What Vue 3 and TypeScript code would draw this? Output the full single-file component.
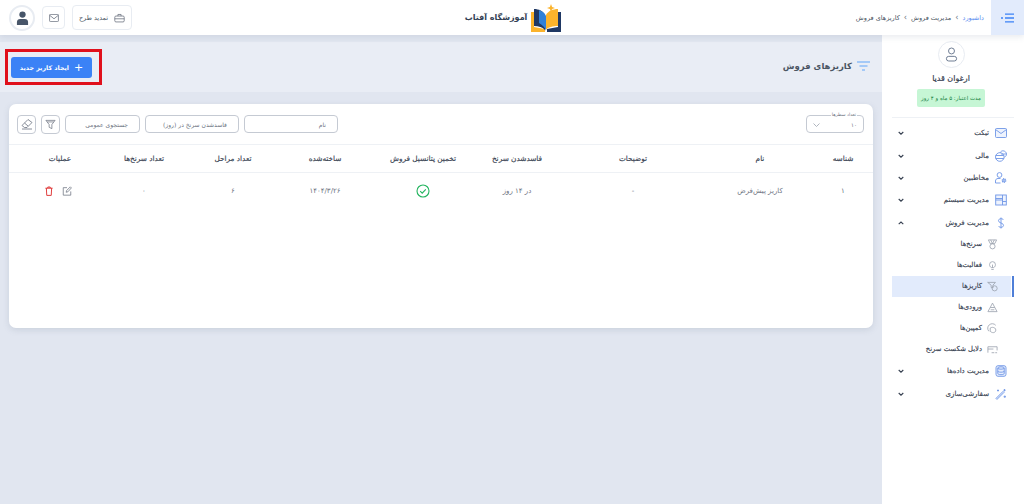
<template>
  <div class="page" dir="rtl">
    <header class="topbar">
      <div class="top-right">
        <button class="menu-toggle">
          <svg width="14" height="10" viewBox="0 0 14 10"><circle cx="1" cy="5" r="1" fill="#3b82f6" /><path d="M4 1.200h9M4 5h9M4 8.800h9" stroke="#3b82f6" stroke-width="1.300" fill="none" /></svg>
        </button>
        <nav class="crumbs">
          <span class="crumb-link">داشبورد</span>
          <span class="crumb-sep">›</span>
          <span>مدیریت فروش</span>
          <span class="crumb-sep">›</span>
          <span>کاریزهای فروش</span>
        </nav>
      </div>
      <div class="logo">
        <svg width="30" height="28" viewBox="0 0 30 28">
          <path d="M0 8h3v15l11 2v3H0z" fill="#fbb32c" />
          <path d="M30 8h-3v15l-11 2v3h14z" fill="#1f3864" />
          <path d="M3 5c5 0 9 2 11 6v15c-3-3-6-4-11-4z" fill="#1f3864" />
          <path d="M27 5c-5 0-10 2-12 6v15c2-3 7-4 12-4z" fill="#fbb32c" />
          <path d="M8 6c3 1 6 3 7 6v15c-1-4-4-6-7-8z" fill="#2f80d8" />
          <path d="M20 0l1.100 2.900L24 4l-2.900 1.100L20 8l-1.100-2.900L16 4l2.900-1.100z" fill="#fbb32c" />
        </svg>
        <span class="logo-text">آموزشگاه آفتاب</span>
      </div>
      <div class="top-left">
        <button class="renew">
          <svg width="11" height="10" viewBox="0 0 14 12" fill="none" stroke="#6b7280" stroke-width="1"><rect x="1" y="3.500" width="12" height="7.500" rx="1.500" /><path d="M5 3.500V1.500h4v2M1 7h12" /></svg>
          <span>تمدید طرح</span>
        </button>
        <button class="mail">
          <svg width="10" height="8" viewBox="0 0 12 10" fill="none" stroke="#6b7280" stroke-width="1"><rect x=".5" y=".5" width="11" height="9" rx="1" /><path d="M.5 1.500L6 6l5.500-4.500" /></svg>
        </button>
        <div class="user-pic">
          <svg width="13" height="14" viewBox="0 0 14 15" fill="#475569"><circle cx="7" cy="3.800" r="3.400" /><path d="M1 15v-3.200c0-2 1.500-3.300 3.500-3.300h5c2 0 3.500 1.300 3.500 3.300V15z" /></svg>
        </div>
      </div>
    </header>

    <div class="body">
      <aside class="sidebar">
        <div class="profile">
          <div class="avatar">
            <svg width="13" height="15" viewBox="0 0 14 16" fill="none" stroke="#64748b" stroke-width="1"><circle cx="7" cy="4.200" r="3.200" /><rect x="1.500" y="10" width="11" height="5" rx="2.500" /></svg>
          </div>
          <div class="user-name">ارغوان قدیا</div>
          <div class="expire">مدت اعتبار: ۵ ماه و ۴ روز</div>
        </div>
        <ul class="menu">
          <template v-for="item in menu" :key="item.title">
            <li class="menu-item">
              <svg class="menu-icon" width="12" height="12" viewBox="0 0 12 12" fill="none" stroke="#6f96e6" stroke-width=".9" v-html="item.icon"></svg>
              <span class="menu-title">{{ item.title }}</span>
              <svg class="chev" width="6" height="4" viewBox="0 0 6 4" fill="none" stroke="#374151" stroke-width="1.100">
                <path :d="item.open ? 'M.7 3.200L3 1l2.300 2.200' : 'M.7 1L3 3.200 5.300 1'" />
              </svg>
            </li>
            <template v-if="item.open">
              <li v-for="sub in subMenu" :key="sub.title" class="sub-item" :class="{ active: sub.active }">
                <svg class="sub-icon" width="11" height="11" viewBox="0 0 12 12" fill="none" stroke="#9ca3af" stroke-width=".9" v-html="sub.icon"></svg>
                <span>{{ sub.title }}</span>
              </li>
            </template>
          </template>
        </ul>
      </aside>

      <main class="content">
        <section class="page-head">
          <div class="page-title">
            <svg width="13" height="10" viewBox="0 0 13 10" fill="none" stroke="#60a5fa" stroke-width="1.200"><path d="M0 1h13M2.500 5h8M5 9h3" /></svg>
            <h1>کاریزهای فروش</h1>
          </div>
          <div class="highlight">
            <button class="create-btn"><span class="plus">+</span><span>ایجاد کاریز جدید</span></button>
          </div>
        </section>

        <section class="card">
          <div class="filters">
            <fieldset class="rows-select">
              <legend>تعداد سطرها</legend>
              <span>۱۰</span>
              <svg width="7" height="4" viewBox="0 0 7 4" fill="none" stroke="#9ca3af" stroke-width=".8"><path d="M.5.500L3.500 3.500 6.500.500" /></svg>
            </fieldset>
            <div class="filter-group">
              <div class="field w-name">نام</div>
              <div class="field w-name">فاسدشدن سرنخ در (روز)</div>
              <div class="field w-search">جستجوی عمومی</div>
              <button class="icon-btn">
                <svg width="11" height="11" viewBox="0 0 12 12" fill="none" stroke="#6b7280" stroke-width=".8"><path d="M1 1.500h10L7.500 6v4.500l-3-1.500V6z" /><path d="M2.500 3.200h7" /></svg>
              </button>
              <button class="icon-btn">
                <svg width="12" height="12" viewBox="0 0 12 12" fill="none" stroke="#6b7280" stroke-width=".8"><path d="M1 7.500L7 1.500l4 3-5 5H3.500z" /><path d="M3.500 5l3.500 3M1 11h10" /></svg>
              </button>
            </div>
          </div>

          <table class="grid">
            <colgroup>
              <col v-for="(w, i) in colWidths" :key="i" :style="{ width: w + 'px' }" />
            </colgroup>
            <thead>
              <tr><th v-for="h in headers" :key="h">{{ h }}</th></tr>
            </thead>
            <tbody>
              <tr>
                <td>۱</td>
                <td>کاریز پیش‌فرض</td>
                <td>-</td>
                <td>در ۱۴ روز</td>
                <td>
                  <svg class="cell-icon" width="14" height="14" viewBox="0 0 14 14" fill="none" stroke="#22b45e" stroke-width="1.100"><circle cx="7" cy="7" r="6" /><path d="M4.200 7.200l2 2 3.600-3.800" /></svg>
                </td>
                <td class="date">۱۴۰۴/۳/۲۶</td>
                <td>۶</td>
                <td>۰</td>
                <td>
                  <div class="ops">
                    <svg width="10" height="10" viewBox="0 0 12 12" fill="none" stroke="#6b7280" stroke-width=".9"><path d="M6 2H1.500v9h9V6.500" /><path d="M5 7.500l.5-2L10 1l1.300 1.300L7 7z" /></svg>
                    <svg width="8" height="10" viewBox="0 0 10 12" fill="none" stroke="#dc2626" stroke-width="1.100"><path d="M.5 2.500h9M3.500 2.500V1h3v1.500M1.700 2.500l.5 9h5.600l.5-9" /></svg>
                  </div>
                </td>
              </tr>
            </tbody>
          </table>
        </section>
      </main>
    </div>
  </div>
</template>

<script setup lang="ts">
interface MenuItem {
  title: string
  icon: string
  open?: boolean
}

interface SubItem {
  title: string
  icon: string
  active?: boolean
}

const menu: MenuItem[] = [
  { title: 'تیکت', icon: '<rect x=".5" y="1.500" width="11" height="9" rx="1" fill="#eef3fd"/><path d="M.5 2.500L6 6.500l5.500-4"/>' },
  { title: 'مالی', icon: '<circle cx="4.800" cy="7" r="4.300"/><path d="M.7 5.500h8.200M.7 8.500h8.200M5 2.800c.6-1.300 1.800-2 3-2 1.800 0 3.500 1.500 3.500 3.400 0 1.300-.8 2.300-2 2.900M6 4h5.500"/>' },
  { title: 'مخاطبین', icon: '<circle cx="4.500" cy="3" r="2.400"/><path d="M.5 11V9c0-1.500 1-2.500 2.500-2.500h2.500M.5 11h5"/><circle cx="9" cy="8.500" r="1.700" fill="#a9c1f0" stroke-width="1.400" stroke-dasharray="1 .6"/>' },
  { title: 'مدیریت سیستم', icon: '<rect x=".7" y="1" width="10.600" height="10" fill="#eef3fd"/><path d="M7.500 1v10M.7 4.500h6.800M.7 6h6.800M7.500 7.500h3.800"/>' },
  { title: 'مدیریت فروش', open: true, icon: '<path d="M8.500 3C8 2 7 1.700 6 1.700 4.500 1.700 3.500 2.500 3.500 3.700 3.500 6.500 8.500 5.500 8.500 8.300 8.500 9.500 7.500 10.300 6 10.300 5 10.300 4 10 3.500 9M6 .5v11"/>' },
  { title: 'مدیریت داده‌ها', icon: '<rect x="1" y=".7" width="10" height="10.600" rx="2" fill="#e6edfc"/><ellipse cx="6" cy="3" rx="3.200" ry="1.200"/><path d="M2.800 3v5.500c0 .7 1.400 1.200 3.200 1.200s3.200-.5 3.200-1.200V3M2.800 6c0 .7 1.400 1.200 3.200 1.200S9.200 6.700 9.200 6"/>' },
  { title: 'سفارشی‌سازی', icon: '<path d="M1 11L8 4l1 1-7 7z" transform="translate(0 -.6)" fill="#e6edfc"/><path d="M9.500 1v2.400M10.700 2.200H8.300M3 1.500v2M4 2.500H2M9.800 7.500v2.400M11 8.700H8.600"/>' },
]

const subMenu: SubItem[] = [
  { title: 'سرنخ‌ها', icon: '<path d="M1.500 1h9L8.500 5H3.500zM4 1l2 4 2-4"/><circle cx="6" cy="8" r="2.800"/>' },
  { title: 'فعالیت‌ها', icon: '<path d="M4.500 8.300C3.500 7.500 2.800 6.500 2.800 5a3.200 3.200 0 016.400 0c0 1.500-.7 2.500-1.700 3.300zM4.700 10.300h2.600M6 5v3.300"/>' },
  { title: 'کاریزها', active: true, icon: '<path d="M.7 1.500h8.500L6.500 4.500v3.200L4.500 7V4.500z"/><circle cx="8.300" cy="8" r="2.800"/>' },
  { title: 'ورودی‌ها', icon: '<path d="M6 1.200L3.500 6h5zM3.500 6L1 10.500h10L8.500 6M4 8.500h4"/>' },
  { title: 'کمپین‌ها', icon: '<path d="M9.500 2.500A4.800 4.800 0 102 9"/><path d="M3.500 5.500c1.500-1 3.500-1 5 0 1.500 1 1.500 3.500 0 4.500-1.500 1-3.500.5-5-1z"/>' },
  { title: 'دلایل شکست سرنخ', icon: '<path d="M1 9.500V3h10v4M1 5.500h6M5 9.500h3M9 9.500h2"/>' },
]

const headers = ['شناسه', 'نام', 'توضیحات', 'فاسدشدن سرنخ', 'تخمین پتانسیل فروش', 'ساخته‌شده', 'تعداد مراحل', 'تعداد سرنخ‌ها', 'عملیات']
const colWidths = [70, 86, 168, 64, 124, 72, 112, 66, 102]
</script>

<style>
html,
body {
  margin: 0;
  background: #e1e6f0;
}
</style>

<style scoped>
* {
  box-sizing: border-box;
}

.page {
  width: 1024px;
  height: 504px;
  overflow: hidden;
  display: flex;
  flex-direction: column;
  font-family: "DejaVu Sans", sans-serif;
  font-size: 6.500px;
  color: #4b5563;
  background: #e1e6f0;
}

button {
  font-family: inherit;
  cursor: pointer;
}

.topbar {
  height: 35px;
  flex: none;
  display: grid;
  grid-template-columns: 1fr auto 1fr;
  align-items: center;
  background: #fff;
  box-shadow: 0 2px 6px rgba(100, 116, 139, 0.15);
  position: relative;
  z-index: 2;
}

.top-right {
  display: flex;
  align-items: center;
  height: 100%;
}

.menu-toggle {
  width: 33px;
  height: 35px;
  border: 0;
  background: #e2ebfc;
  display: flex;
  align-items: center;
  justify-content: center;
  padding: 0;
}

.crumbs {
  display: flex;
  align-items: center;
  gap: 4px;
  padding-right: 7px;
  color: #4b5563;
  white-space: nowrap;
}

.crumb-link {
  color: #5b8def;
}

.crumb-sep {
  font-size: 8px;
  color: #6b7280;
}

.logo {
  display: flex;
  align-items: center;
  gap: 4px;
  padding-left: 2px;
}

.logo-text {
  font-size: 8px;
  font-weight: 700;
  color: #334155;
}

.top-left {
  display: flex;
  align-items: center;
  justify-content: flex-end;
  gap: 7px;
  padding-left: 9px;
}

.renew {
  width: 60px;
  height: 25px;
  display: flex;
  align-items: center;
  justify-content: center;
  gap: 6px;
  background: #fff;
  border: 1px solid #e8ecf2;
  border-radius: 4px;
  font-size: 6.500px;
  color: #4b5563;
  padding: 0;
}

.mail {
  width: 23px;
  height: 23px;
  display: flex;
  align-items: center;
  justify-content: center;
  background: #fff;
  border: 1px solid #e8ecf2;
  border-radius: 4px;
  padding: 0;
}

.user-pic {
  width: 26px;
  height: 26px;
  display: flex;
  align-items: center;
  justify-content: center;
  border: 2px solid #e8ecf2;
  border-radius: 50%;
}

.body {
  flex: 1;
  display: flex;
  min-height: 0;
}

.sidebar {
  width: 142px;
  flex: none;
  background: #fff;
  padding-top: 6px;
}

.profile {
  display: flex;
  flex-direction: column;
  align-items: center;
  margin: 0 10px;
  padding: 0 4px 10px 0;
  border-bottom: 1px solid #eef1f5;
}

.avatar {
  width: 27px;
  height: 27px;
  border-radius: 50%;
  border: 1px solid #e8ecf2;
  display: flex;
  align-items: center;
  justify-content: center;
}

.user-name {
  margin-top: 6px;
  font-size: 8px;
  color: #374151;
  -webkit-text-stroke: 0.2px #374151;
}

.expire {
  margin-top: 6px;
  width: 68px;
  height: 18px;
  display: flex;
  align-items: center;
  justify-content: center;
  background: #c6f6d5;
  color: #15803d;
  border-radius: 2px;
  font-size: 5.500px;
  white-space: nowrap;
}

.menu {
  list-style: none;
  margin: 4px 0 0;
  padding: 0;
}

.menu-item {
  height: 22.400px;
  display: flex;
  align-items: center;
  padding: 0 17px 0 16px;
  font-size: 7px;
  color: #374151;
  -webkit-text-stroke: 0.15px #374151;
}

.menu-icon {
  flex: none;
  margin-left: 6px;
}

.menu-title {
  flex: 1;
}

.chev {
  flex: none;
}

.sub-item {
  height: 21px;
  display: flex;
  align-items: center;
  gap: 5px;
  margin-left: 10px;
  margin-right: 13px;
  padding-right: 13px;
  font-size: 6.800px;
  color: #374151;
  -webkit-text-stroke: 0.15px #374151;
  position: relative;
}

.sub-item.active {
  background: #e2ebfc;
}

.sub-item.active::after {
  content: "";
  position: absolute;
  top: 0;
  bottom: 0;
  right: -3px;
  width: 2px;
  background: #4f7fd8;
}

.content {
  flex: 1;
  min-width: 0;
  padding-top: 7px;
}

.page-head {
  height: 50px;
  display: flex;
  align-items: center;
  justify-content: space-between;
  background: #e9edf5;
  padding: 0 12px 0 5px;
}

.page-title {
  display: flex;
  align-items: center;
  gap: 5px;
  margin-top: -3px;
}

h1 {
  margin: 0;
  font-size: 8.500px;
  font-weight: 700;
  color: #4b5563;
}

.highlight {
  width: 97px;
  height: 36px;
  border: 3px solid #e0101c;
  display: flex;
  align-items: center;
  justify-content: flex-end;
  padding-left: 3px;
}

.create-btn {
  width: 81px;
  height: 21px;
  border: 0;
  border-radius: 3px;
  background: #3b82f6;
  color: #fff;
  font-size: 6.300px;
  font-weight: 700;
  display: flex;
  align-items: center;
  justify-content: center;
  gap: 5px;
  padding: 0;
  white-space: nowrap;
}

.plus {
  font-size: 11px;
  font-weight: 400;
  line-height: 1;
}

.card {
  margin: 12px 9px 0 9px;
  height: 224px;
  width: 864px;
  background: #fff;
  border-radius: 7px;
  box-shadow: 0 2px 6px rgba(100, 116, 139, 0.18);
}

.filters {
  height: 40px;
  display: flex;
  align-items: center;
  justify-content: space-between;
  padding: 0 9px 0 8px;
}

.rows-select {
  width: 58px;
  height: 20px;
  margin: -2px 0 0;
  padding: 0 6px;
  display: flex;
  align-items: center;
  justify-content: space-between;
  border: 1px solid #c5cad3;
  border-radius: 4px;
  font-size: 5.500px;
  color: #6b7280;
}

.rows-select legend {
  padding: 0 1px;
  font-size: 4.500px;
  line-height: 4px;
}

.filter-group {
  display: flex;
  align-items: center;
  gap: 5px;
}

.field {
  height: 18px;
  display: flex;
  align-items: center;
  padding: 0 11px;
  border: 1px solid #c5cad3;
  border-radius: 4px;
  font-size: 6px;
  color: #6b7280;
  white-space: nowrap;
}

.w-name {
  width: 94px;
}

.w-search {
  width: 75px;
}

.icon-btn {
  width: 19px;
  height: 19px;
  display: flex;
  align-items: center;
  justify-content: center;
  background: #fff;
  border: 1px solid #c5cad3;
  border-radius: 4px;
  padding: 0;
}

.grid {
  width: 864px;
  border-collapse: collapse;
  table-layout: fixed;
}

th,
td {
  text-align: center;
  padding: 0;
  white-space: nowrap;
}

th:first-child,
td:first-child {
  padding-left: 10px;
}

th {
  height: 28px;
  border-top: 1px solid #eef1f5;
  border-bottom: 1px solid #eef1f5;
  font-size: 7.300px;
  font-weight: 400;
  color: #374151;
  -webkit-text-stroke: 0.15px #374151;
}

td {
  height: 36px;
  font-size: 7px;
  color: #6b7280;
}

td.date {
  letter-spacing: 1.300px;
}

.cell-icon {
  display: block;
  margin: 0 auto;
}

.ops {
  display: flex;
  justify-content: center;
  align-items: center;
  gap: 9px;
  padding-right: 4px;
}
</style>
